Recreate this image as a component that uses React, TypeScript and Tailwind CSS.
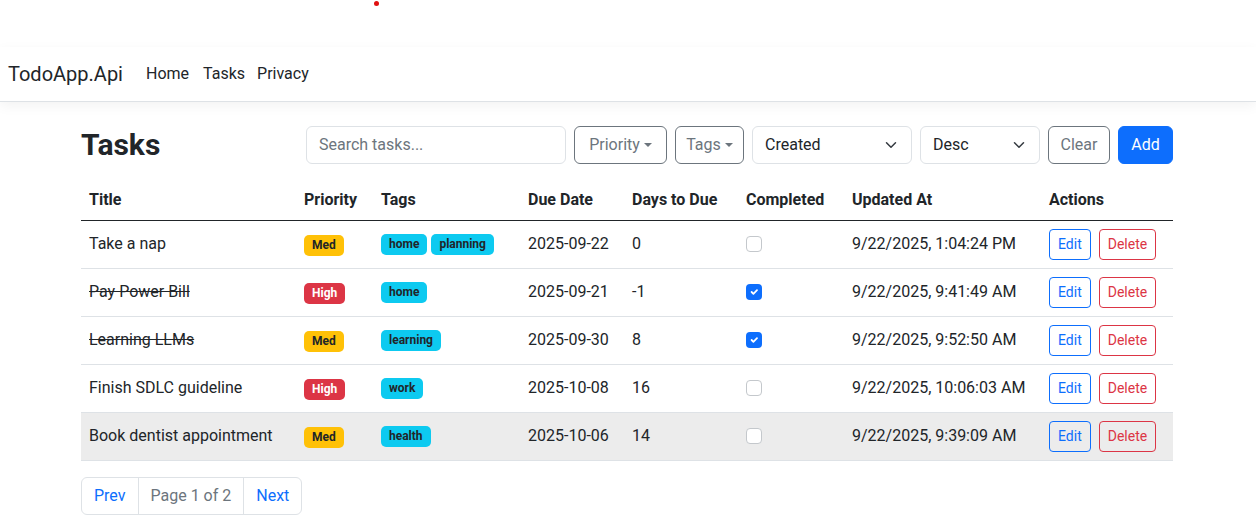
import React from 'react';

type Task = {
  title: string;
  priority: 'Med' | 'High';
  tags: string[];
  due: string;
  days: string;
  done: boolean;
  updated: string;
};

const tasks: Task[] = [
  { title: 'Take a nap', priority: 'Med', tags: ['home', 'planning'], due: '2025-09-22', days: '0', done: false, updated: '9/22/2025, 1:04:24 PM' },
  { title: 'Pay Power Bill', priority: 'High', tags: ['home'], due: '2025-09-21', days: '-1', done: true, updated: '9/22/2025, 9:41:49 AM' },
  { title: 'Learning LLMs', priority: 'Med', tags: ['learning'], due: '2025-09-30', days: '8', done: true, updated: '9/22/2025, 9:52:50 AM' },
  { title: 'Finish SDLC guideline', priority: 'High', tags: ['work'], due: '2025-10-08', days: '16', done: false, updated: '9/22/2025, 10:06:03 AM' },
  { title: 'Book dentist appointment', priority: 'Med', tags: ['health'], due: '2025-10-06', days: '14', done: false, updated: '9/22/2025, 9:39:09 AM' },
];

const Caret = () => (
  <span className="ml-[4px] inline-block align-[3px] border-x-[4px] border-t-[4px] border-x-transparent border-t-current" />
);

const Chevron = () => (
  <svg width="16" height="12" viewBox="0 0 16 16" className="shrink-0">
    <path d="m2 5 6 6 6-6" fill="none" stroke="#343a40" strokeWidth="2" strokeLinecap="round" strokeLinejoin="round" />
  </svg>
);

const Check = ({ checked }: { checked: boolean }) =>
  checked ? (
    <span className="flex h-4 w-4 items-center justify-center rounded-[4px] bg-[#0d6efd]">
      <svg width="12" height="12" viewBox="0 0 20 20">
        <path d="m6 10 3 3 6-6" fill="none" stroke="#fff" strokeWidth="3" strokeLinecap="round" strokeLinejoin="round" />
      </svg>
    </span>
  ) : (
    <span className="block h-4 w-4 rounded-[4px] border border-[#c4c8cc] bg-white" />
  );

export default function App() {
  return (
    <div className="relative min-h-[521px] bg-white text-[#212529]" style={{ fontFamily: 'Roboto, "Liberation Sans", sans-serif' }}>
      <span className="absolute left-[374px] top-[1px] h-[5px] w-[5px] rounded-full bg-[#e01010]" />

      {/* Navbar */}
      <div className="pt-[47px]">
        <nav className="flex h-[55px] items-center border-b border-[#dee2e6] bg-white pl-[8px] shadow-[0_4px_12px_rgba(0,0,0,0.05)]">
          <span className="mr-[15px] text-[20px] leading-[30px]">TodoApp.Api</span>
          <a className="px-[8px] text-[16px] text-[#212529]">Home</a>
          <a className="px-[6px] text-[16px] text-[#212529]">Tasks</a>
          <a className="px-[6px] text-[16px] text-[#212529]">Privacy</a>
        </nav>
      </div>

      <main className="ml-[81px] w-[1092px] pt-[24px]">
        {/* Header + filters */}
        <div className="mb-[16px] flex items-center justify-between">
          <h2 className="text-[30px] font-bold leading-[38px]">Tasks</h2>
          <div className="flex items-center gap-2 text-[16px]">
            <div className="flex h-[38px] w-[260px] items-center rounded-[6px] border border-[#dee2e6] px-[12px] text-[#6c757d]">
              Search tasks...
            </div>
            <button className="flex h-[38px] w-[93px] items-center justify-center rounded-[6px] border border-[#6c757d] text-[#6c757d]">
              Priority<Caret />
            </button>
            <button className="flex h-[38px] w-[69px] items-center justify-center rounded-[6px] border border-[#6c757d] text-[#6c757d]">
              Tags<Caret />
            </button>
            <div className="flex h-[38px] w-[160px] items-center justify-between rounded-[6px] border border-[#dee2e6] pl-[12px] pr-[12px]">
              <span>Created</span>
              <Chevron />
            </div>
            <div className="flex h-[38px] w-[120px] items-center justify-between rounded-[6px] border border-[#dee2e6] pl-[12px] pr-[12px]">
              <span>Desc</span>
              <Chevron />
            </div>
            <button className="flex h-[38px] w-[62px] items-center justify-center rounded-[6px] border border-[#6c757d] text-[#6c757d]">
              Clear
            </button>
            <button className="flex h-[38px] w-[55px] items-center justify-center rounded-[6px] border border-[#0d6efd] bg-[#0d6efd] text-white">
              Add
            </button>
          </div>
        </div>

        {/* Table */}
        <table className="w-full table-fixed border-collapse text-[16px]">
          <colgroup>
            <col className="w-[215px]" />
            <col className="w-[77px]" />
            <col className="w-[147px]" />
            <col className="w-[104px]" />
            <col className="w-[114px]" />
            <col className="w-[106px]" />
            <col className="w-[197px]" />
            <col className="w-[132px]" />
          </colgroup>
          <thead>
            <tr className="border-b border-[#212529] text-left">
              {['Title', 'Priority', 'Tags', 'Due Date', 'Days to Due', 'Completed', 'Updated At', 'Actions'].map(h => (
                <th key={h} className="h-[40px] px-[8px] font-bold leading-[24px] whitespace-nowrap">{h}</th>
              ))}
            </tr>
          </thead>
          <tbody>
            {tasks.map((t, i) => (
              <tr key={t.title} className={`h-[48px] border-b border-[#dee2e6] ${i === tasks.length - 1 ? 'bg-[#ececec]' : ''}`}>
                <td className={`px-[8px] whitespace-nowrap ${t.done ? 'line-through' : ''}`}>{t.title}</td>
                <td className="px-[8px]">
                  <span
                    className={`inline-flex h-[21px] items-center rounded-[5px] px-[8px] text-[12px] font-bold ${
                      t.priority === 'High' ? 'bg-[#dc3545] text-white' : 'bg-[#ffc107] text-[#212529]'
                    }`}
                  >
                    {t.priority}
                  </span>
                </td>
                <td className="px-[8px]">
                  <div className="flex gap-1">
                    {t.tags.map(tag => (
                      <span key={tag} className="inline-flex h-[21px] items-center rounded-[5px] bg-[#0dcaf0] px-[8px] text-[12px] font-bold text-[#212529]">
                        {tag}
                      </span>
                    ))}
                  </div>
                </td>
                <td className="px-[8px]">{t.due}</td>
                <td className="px-[8px]">{t.days}</td>
                <td className="px-[8px]">
                  <Check checked={t.done} />
                </td>
                <td className="px-[8px] whitespace-nowrap">{t.updated}</td>
                <td className="px-[8px]">
                  <div className="flex gap-2">
                    <button className="h-[31px] rounded-[4px] border border-[#0d6efd] px-[8px] text-[14px] text-[#0d6efd]">Edit</button>
                    <button className="h-[31px] rounded-[4px] border border-[#dc3545] px-[8px] text-[14px] text-[#dc3545]">Delete</button>
                  </div>
                </td>
              </tr>
            ))}
          </tbody>
        </table>

        {/* Pagination */}
        <div className="mt-[16px] flex w-fit rounded-[6px] border border-[#dee2e6] text-[16px]">
          <span className="flex h-[36px] items-center px-[12px] text-[#0d6efd]">Prev</span>
          <span className="flex h-[36px] items-center border-l border-[#dee2e6] px-[12px] text-[#6c757d]">Page 1 of 2</span>
          <span className="flex h-[36px] items-center border-l border-[#dee2e6] px-[12px] text-[#0d6efd]">Next</span>
        </div>
      </main>
    </div>
  );
}
